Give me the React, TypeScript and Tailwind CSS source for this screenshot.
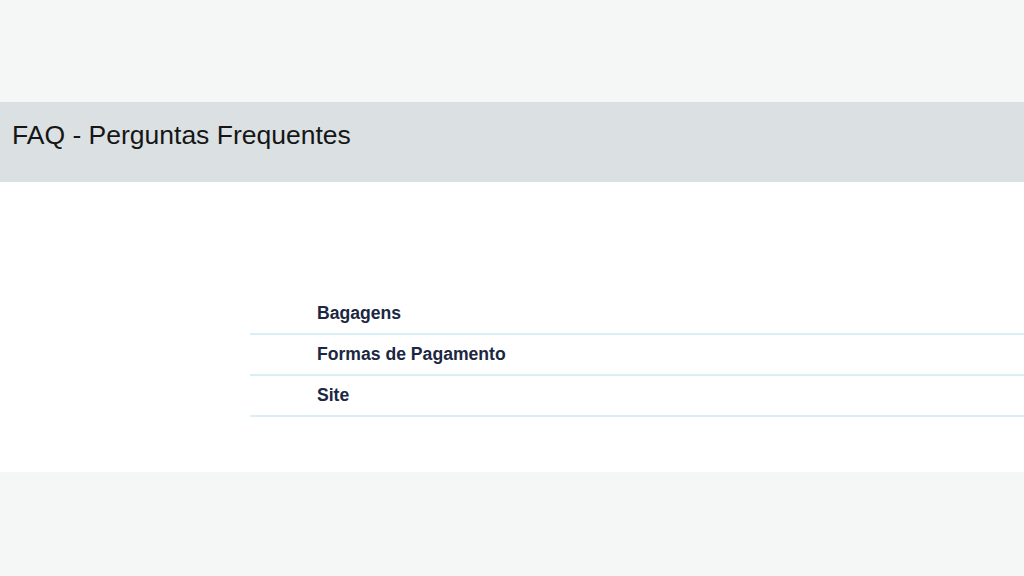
import React from 'react';

const topics = ['Bagagens', 'Formas de Pagamento', 'Site'];

export default function App() {
  return (
    <div className="flex min-h-[576px] w-full flex-col bg-[#f5f7f7] font-['Liberation_Sans',Arial,sans-serif]">
      <div className="h-[102px]" />
      <div className="h-[80px] bg-[#dbe1e3] px-3 pt-[17px]">
        <h1 className="text-[26.5px] leading-[32px] text-[#161616]">FAQ - Perguntas Frequentes</h1>
      </div>
      <div className="bg-white pb-[55px] pl-[250px] pt-[112px]">
        <ul>
          {topics.map((t) => (
            <li
              key={t}
              className="flex h-[41px] items-center border-b-2 border-[#d8eff8] pl-[67px] text-[17.6px] font-bold text-[#1c2742]"
            >
              {t}
            </li>
          ))}
        </ul>
      </div>
      <div className="flex-1" />
    </div>
  );
}
